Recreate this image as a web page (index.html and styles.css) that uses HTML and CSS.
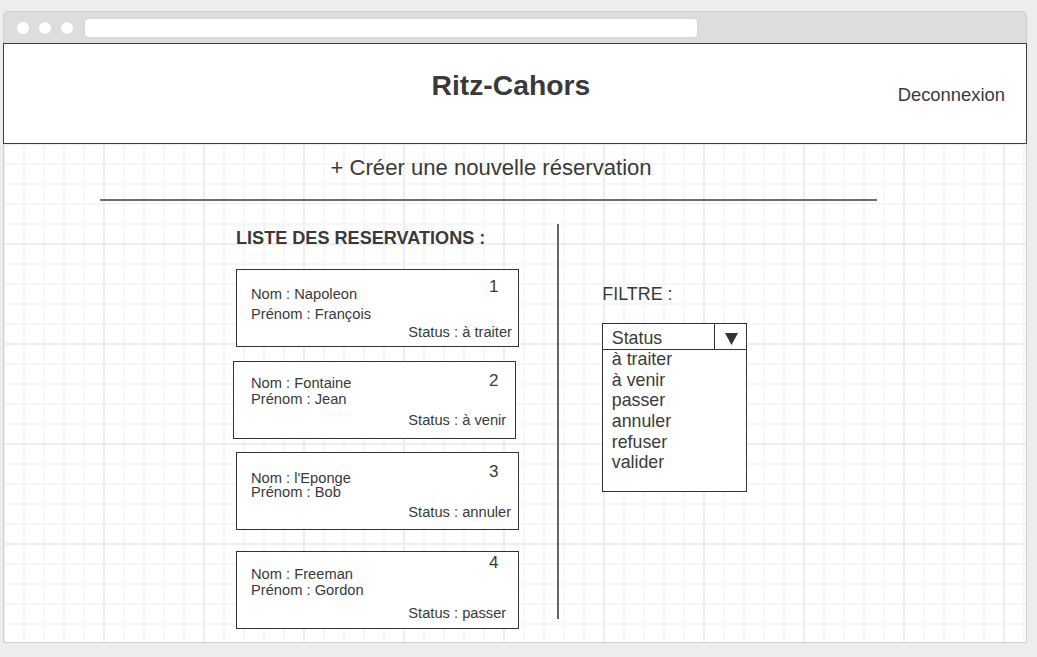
FILE: index.html
```html
<!DOCTYPE html>
<html lang="fr">
<head>
<meta charset="utf-8">
<title>Ritz-Cahors</title>
<link rel="stylesheet" href="styles.css">
</head>
<body>
<div class="window">
  <div class="titlebar">
    <span class="dot"></span>
    <span class="dot"></span>
    <span class="dot"></span>
    <span class="address"></span>
  </div>
  <header class="header">
    <h1 class="title">Ritz-Cahors</h1>
    <a class="logout">Deconnexion</a>
  </header>
  <main class="canvas">
    <div class="create">+ Créer une nouvelle réservation</div>
    <div class="rule"></div>
    <div class="main">
      <section class="list">
        <h2 class="list-title">LISTE DES RESERVATIONS :</h2>
        <div class="card card--1">
          <div class="card-top">
            <div class="names">
              <div>Nom : Napoleon</div>
              <div>Prénom : François</div>
            </div>
            <div class="num">1</div>
          </div>
          <div class="status">Status : à traiter</div>
        </div>
        <div class="card card--2">
          <div class="card-top">
            <div class="names">
              <div>Nom : Fontaine</div>
              <div>Prénom : Jean</div>
            </div>
            <div class="num">2</div>
          </div>
          <div class="status">Status : à venir</div>
        </div>
        <div class="card card--3">
          <div class="card-top">
            <div class="names">
              <div>Nom : l'Eponge</div>
              <div>Prénom : Bob</div>
            </div>
            <div class="num">3</div>
          </div>
          <div class="status">Status : annuler</div>
        </div>
        <div class="card card--4">
          <div class="card-top">
            <div class="names">
              <div>Nom : Freeman</div>
              <div>Prénom : Gordon</div>
            </div>
            <div class="num">4</div>
          </div>
          <div class="status">Status : passer</div>
        </div>
      </section>
      <div class="divider"></div>
      <section class="filter">
        <div class="filter-title">FILTRE :</div>
        <div class="select">
          <div class="select-head">
            <span class="select-label">Status</span>
            <span class="select-arrow">
              <svg width="13" height="12" viewBox="0 0 13 12"><polygon points="0,0 13,0 6.5,12" fill="#333"/></svg>
            </span>
          </div>
          <ul class="options">
            <li>à traiter</li>
            <li>à venir</li>
            <li>passer</li>
            <li>annuler</li>
            <li>refuser</li>
            <li>valider</li>
          </ul>
        </div>
      </section>
    </div>
  </main>
</div>
</body>
</html>
```
FILE: styles.css
```css
* { box-sizing: border-box; }

html, body {
  margin: 0;
  padding: 0;
}

body {
  background: #ededed;
  padding: 11px 0 0 3px;
  font-family: "Liberation Sans", Arial, sans-serif;
  color: #3a3a3a;
}

.window {
  width: 1024px;
}

.titlebar {
  height: 32px;
  background: #dddddd;
  border: 1px solid #cbcbcb;
  border-bottom: none;
  border-radius: 5px 5px 0 0;
  display: flex;
  align-items: center;
  padding-left: 12.7px;
  padding-top: 1px;
}

.dot {
  width: 12px;
  height: 12px;
  border-radius: 50%;
  background: #fff;
  margin-right: 10px;
  flex: none;
}

.dot:nth-child(3) {
  margin-right: 11.8px;
}

.address {
  width: 614px;
  height: 20px;
  background: #fff;
  border: 1px solid #d6d6d6;
  border-radius: 4px;
}

.header {
  height: 101px;
  border: 1px solid #3f3f3f;
  background: #fff;
  display: flex;
  align-items: flex-start;
  padding-right: 21px;
}

.title {
  margin: 24.8px 0 0 427.5px;
  font-size: 28.3px;
  line-height: 32px;
  font-weight: bold;
  color: #3a3a3a;
}

.logout {
  margin: 40.4px 0 0 auto;
  font-size: 18.4px;
  line-height: 21px;
  color: #3a3a3a;
}

.canvas {
  height: 499px;
  border: 1px solid #d0d0d0;
  border-top: none;
  background-color: #fff;
  background-image:
    linear-gradient(to right, #eeeeee 2px, transparent 2px),
    linear-gradient(to bottom, #eeeeee 2px, transparent 2px),
    linear-gradient(to right, #f6f6f6 2px, transparent 2px),
    linear-gradient(to bottom, #f6f6f6 2px, transparent 2px);
  background-size: 100px 100px, 100px 100px, 20px 20px, 20px 20px;
  background-position: -1px -1px;
  display: flex;
  flex-direction: column;
  align-items: flex-start;
}

.create {
  margin: 11.4px 0 0 326.5px;
  font-size: 22.1px;
  line-height: 26px;
}

.rule {
  margin: 17.6px 0 0 96px;
  width: 777px;
  height: 2px;
  background: #6d6d6d;
}

.main {
  display: flex;
  align-items: flex-start;
}

.list {
  margin-left: 232px;
  width: 283px;
}

.list-title {
  margin: 27.3px 0 0 0;
  font-size: 18.1px;
  line-height: 21px;
  font-weight: bold;
  white-space: nowrap;
}

.card {
  width: 283px;
  height: 78px;
  border: 1px solid #333;
  background: #fff;
  display: flex;
  flex-direction: column;
  font-size: 14.7px;
  padding: 0;
}

.card-top {
  display: flex;
  justify-content: space-between;
  align-items: flex-start;
  padding-left: var(--pl);
  padding-right: var(--pr);
}

.names {
  margin-top: var(--names-mt);
  line-height: var(--lh);
  white-space: nowrap;
}

.num {
  margin-top: var(--num-mt);
  font-size: 17px;
  line-height: 17px;
}

.status {
  margin-top: auto;
  margin-bottom: var(--sb);
  padding-left: var(--sl);
  line-height: 16px;
  white-space: nowrap;
}

.card--1 {
  margin-top: 19.7px;
  --pl: 14px; --pr: 19.5px; --names-mt: 14.2px; --lh: 20px;
  --num-mt: 8.5px; --sb: 6.9px; --sl: 171.3px;
}

.card--2 {
  margin-top: 14px;
  margin-left: -3px;
  --pl: 17px; --pr: 16.5px; --names-mt: 12.8px; --lh: 16.7px;
  --num-mt: 10px; --sb: 9.9px; --sl: 174.3px;
}

.card--3 {
  margin-top: 13px;
  --pl: 14px; --pr: 19.5px; --names-mt: 19.4px; --lh: 13.6px;
  --num-mt: 10px; --sb: 8.9px; --sl: 171.3px;
}

.card--4 {
  margin-top: 21px;
  --pl: 14px; --pr: 19.5px; --names-mt: 14px; --lh: 16px;
  --num-mt: 2.5px; --sb: 6.9px; --sl: 171.3px;
}

.divider {
  margin: 23px 0 0 38px;
  width: 2px;
  height: 395px;
  background: #666;
}

.filter {
  margin-left: 43.3px;
}

.filter-title {
  margin-top: 83px;
  font-size: 17.9px;
  line-height: 20px;
}

.select {
  margin-top: 19px;
  width: 145px;
  height: 169px;
  border: 1px solid #333;
  background: #fff;
  font-size: 17.8px;
}

.select-head {
  display: flex;
  height: 26px;
  border-bottom: 1px solid #333;
}

.select-label {
  flex: 1;
  padding: 3px 0 0 8.5px;
  line-height: 22px;
}

.select-arrow {
  width: 32px;
  border-left: 1px solid #333;
  display: flex;
  justify-content: center;
  padding-top: 9px;
  padding-left: 1px;
}

.select-arrow svg {
  display: block;
}

.options {
  list-style: none;
  margin: -1px 0 0 0;
  padding: 0 0 0 8.5px;
  line-height: 20.66px;
}
```
